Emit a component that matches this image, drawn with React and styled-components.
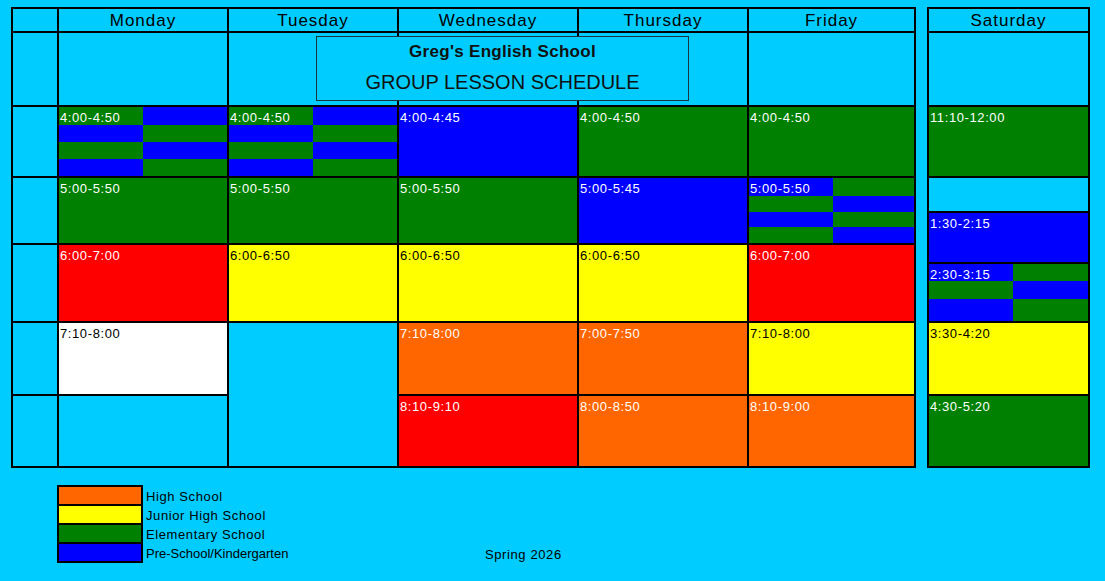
import React from "react";
import styled, { createGlobalStyle } from "styled-components";

const C = {
  cyan: "#00ccff",
  green: "#008000",
  blue: "#0000ff",
  red: "#ff0000",
  yellow: "#ffff00",
  orange: "#ff6600",
  white: "#ffffff",
  line: "#000000",
};

const GlobalStyle = createGlobalStyle`
  html, body {
    margin: 0;
    padding: 0;
    height: 100%;
    background: ${C.cyan};
  }
  body {
    font-family: "Liberation Sans", Arial, sans-serif;
    color: #000;
  }
`;

const Page = styled.div`
  padding: 7px 11px 0 11px;
`;

const Tables = styled.div`
  display: flex;
  gap: 11px;
  align-items: flex-start;
`;

const Board = styled.div`
  position: relative;
`;

const Grid = styled.div`
  display: grid;
  grid-template-columns: ${(p) => p.$cols};
  grid-template-rows: ${(p) => p.$rows};
  gap: 2px;
  padding: 2px;
  background: ${C.line};
`;

const Blank = styled.div`
  background: ${C.cyan};
  grid-row: ${(p) => (p.$span ? `span ${p.$span}` : "auto")};
`;

const DayHeader = styled.div`
  background: ${C.cyan};
  display: flex;
  align-items: center;
  justify-content: center;
  font-size: 17px;
  letter-spacing: 1px;
  padding-top: 1px;
`;

const Slot = styled.div`
  background: ${(p) => p.$bg};
  color: ${(p) => p.$ink};
  grid-row: ${(p) => (p.$span ? `span ${p.$span}` : "auto")};
  overflow: hidden;
`;

const SlotTime = styled.div`
  font-size: 13px;
  line-height: 15px;
  letter-spacing: 0.6px;
  white-space: nowrap;
  padding: 3px 0 0 1px;
`;

const Checker = styled.div`
  display: grid;
  grid-template-columns: 84px 1fr;
  grid-template-rows: ${(p) => p.$rows};
  height: 100%;
  color: ${C.white};
`;

const Patch = styled.div`
  background: ${(p) => p.$bg};
  min-width: 0;
`;

const TitleBox = styled.div`
  position: absolute;
  left: 305px;
  top: 29px;
  width: 371px;
  height: 59px;
  border: 1px solid #1c3440;
  background: ${C.cyan};
  display: flex;
  flex-direction: column;
  align-items: center;
  padding-top: 4px;
  box-sizing: content-box;
`;

const SchoolName = styled.div`
  font-family: "Liberation Sans", Arial, sans-serif;
  font-weight: bold;
  font-size: 17px;
  line-height: 20px;
  letter-spacing: 0.3px;
  color: #111;
  padding-top: 1px;
`;

const ScheduleName = styled.div`
  font-family: "Liberation Sans", Arial, sans-serif;
  font-size: 20px;
  line-height: 24px;
  margin-top: 8px;
  color: #111;
`;

const Footer = styled.div`
  display: grid;
  grid-template-columns: 428px auto;
  align-items: start;
  margin-top: 17px;
  padding-left: 46px;
`;

const Legend = styled.div`
  display: flex;
  align-items: flex-start;
  gap: 3px;
`;

const SwatchStack = styled.div`
  display: grid;
  grid-template-rows: repeat(4, 17px);
  gap: 2px;
  padding: 2px;
  width: 82px;
  background: ${C.line};
`;

const Swatch = styled.div`
  background: ${(p) => p.$bg};
`;

const LabelStack = styled.div`
  display: grid;
  grid-template-rows: repeat(4, 19px);
  padding-top: 4px;
`;

const LegendLabel = styled.div`
  font-size: 13px;
  line-height: 15px;
  letter-spacing: ${(p) => (p.$tight ? "0" : "0.6px")};
  white-space: nowrap;
`;

const Season = styled.div`
  font-size: 13px;
  line-height: 15px;
  letter-spacing: 0.6px;
  padding-top: 62px;
`;

const inkFor = (bg) => (bg === C.yellow || bg === C.white ? "#000" : "#fff");

function CheckerSlot({ label, first, rows, template }) {
  const other = first === C.green ? C.blue : C.green;
  const patches = [];
  for (let r = 0; r < rows; r++) {
    for (let c = 0; c < 2; c++) {
      const bg = (r + c) % 2 === 0 ? first : other;
      patches.push(
        <Patch key={`${r}-${c}`} $bg={bg}>
          {r === 0 && c === 0 ? <SlotTime>{label}</SlotTime> : null}
        </Patch>
      );
    }
  }
  return (
    <Slot $bg={C.cyan} $ink="#fff">
      <Checker $rows={template || `repeat(${rows}, 1fr)`}>{patches}</Checker>
    </Slot>
  );
}

function Cell({ cell }) {
  if (!cell) return <Blank />;
  if (cell.checker)
    return (
      <CheckerSlot
        label={cell.label}
        first={cell.first}
        rows={cell.rows}
        template={cell.template}
      />
    );
  if (cell.blank) return <Blank $span={cell.span} />;
  return (
    <Slot $bg={cell.bg} $ink={inkFor(cell.bg)} $span={cell.span}>
      <SlotTime>{cell.label}</SlotTime>
    </Slot>
  );
}

const days = ["Monday", "Tuesday", "Wednesday", "Thursday", "Friday"];

const weekRows = [
  [
    { checker: true, label: "4:00-4:50", first: C.green, rows: 4 },
    { checker: true, label: "4:00-4:50", first: C.green, rows: 4 },
    { bg: C.blue, label: "4:00-4:45" },
    { bg: C.green, label: "4:00-4:50" },
    { bg: C.green, label: "4:00-4:50" },
  ],
  [
    { bg: C.green, label: "5:00-5:50" },
    { bg: C.green, label: "5:00-5:50" },
    { bg: C.green, label: "5:00-5:50" },
    { bg: C.blue, label: "5:00-5:45" },
    { checker: true, label: "5:00-5:50", first: C.blue, rows: 4 },
  ],
  [
    { bg: C.red, label: "6:00-7:00" },
    { bg: C.yellow, label: "6:00-6:50" },
    { bg: C.yellow, label: "6:00-6:50" },
    { bg: C.yellow, label: "6:00-6:50" },
    { bg: C.red, label: "6:00-7:00" },
  ],
  [
    { bg: C.white, label: "7:10-8:00" },
    { blank: true, span: 2 },
    { bg: C.orange, label: "7:10-8:00" },
    { bg: C.orange, label: "7:00-7:50" },
    { bg: C.yellow, label: "7:10-8:00" },
  ],
  [
    { blank: true },
    { bg: C.red, label: "8:10-9:10" },
    { bg: C.orange, label: "8:00-8:50" },
    { bg: C.orange, label: "8:10-9:00" },
  ],
];

const saturday = [
  { bg: C.green, label: "11:10-12:00" },
  { blank: true },
  { bg: C.blue, label: "1:30-2:15" },
  { checker: true, label: "2:30-3:15", first: C.blue, rows: 3, template: "17px 18px 1fr" },
  { bg: C.yellow, label: "3:30-4:20" },
  { bg: C.green, label: "4:30-5:20" },
];

const legend = [
  { bg: C.orange, label: "High School" },
  { bg: C.yellow, label: "Junior High School" },
  { bg: C.green, label: "Elementary School" },
  { bg: C.blue, label: "Pre-School/Kindergarten", tight: true },
];

export default function App() {
  return (
    <>
      <GlobalStyle />
      <Page>
        <Tables>
          <Board>
            <Grid
              $cols="44px 168px 168px 178px 168px 165px"
              $rows="22px 72px 69px 65px 76px 71px 70px"
            >
              <Blank />
              {days.map((d) => (
                <DayHeader key={d}>{d}</DayHeader>
              ))}
              <Blank />
              {days.map((d) => (
                <Blank key={`t-${d}`} />
              ))}
              {weekRows.map((row, i) => (
                <React.Fragment key={i}>
                  <Blank />
                  {row.map((cell, j) => (
                    <Cell key={j} cell={cell} />
                  ))}
                </React.Fragment>
              ))}
            </Grid>
            <TitleBox>
              <SchoolName>Greg's English School</SchoolName>
              <ScheduleName>GROUP LESSON SCHEDULE</ScheduleName>
            </TitleBox>
          </Board>
          <Grid $cols="159px" $rows="22px 72px 69px 33px 49px 57px 71px 70px">
            <DayHeader>Saturday</DayHeader>
            <Blank />
            {saturday.map((cell, i) => (
              <Cell key={i} cell={cell} />
            ))}
          </Grid>
        </Tables>
        <Footer>
          <Legend>
            <SwatchStack>
              {legend.map((l) => (
                <Swatch key={l.label} $bg={l.bg} />
              ))}
            </SwatchStack>
            <LabelStack>
              {legend.map((l) => (
                <LegendLabel key={l.label} $tight={l.tight}>
                  {l.label}
                </LegendLabel>
              ))}
            </LabelStack>
          </Legend>
          <Season>Spring 2026</Season>
        </Footer>
      </Page>
    </>
  );
}
